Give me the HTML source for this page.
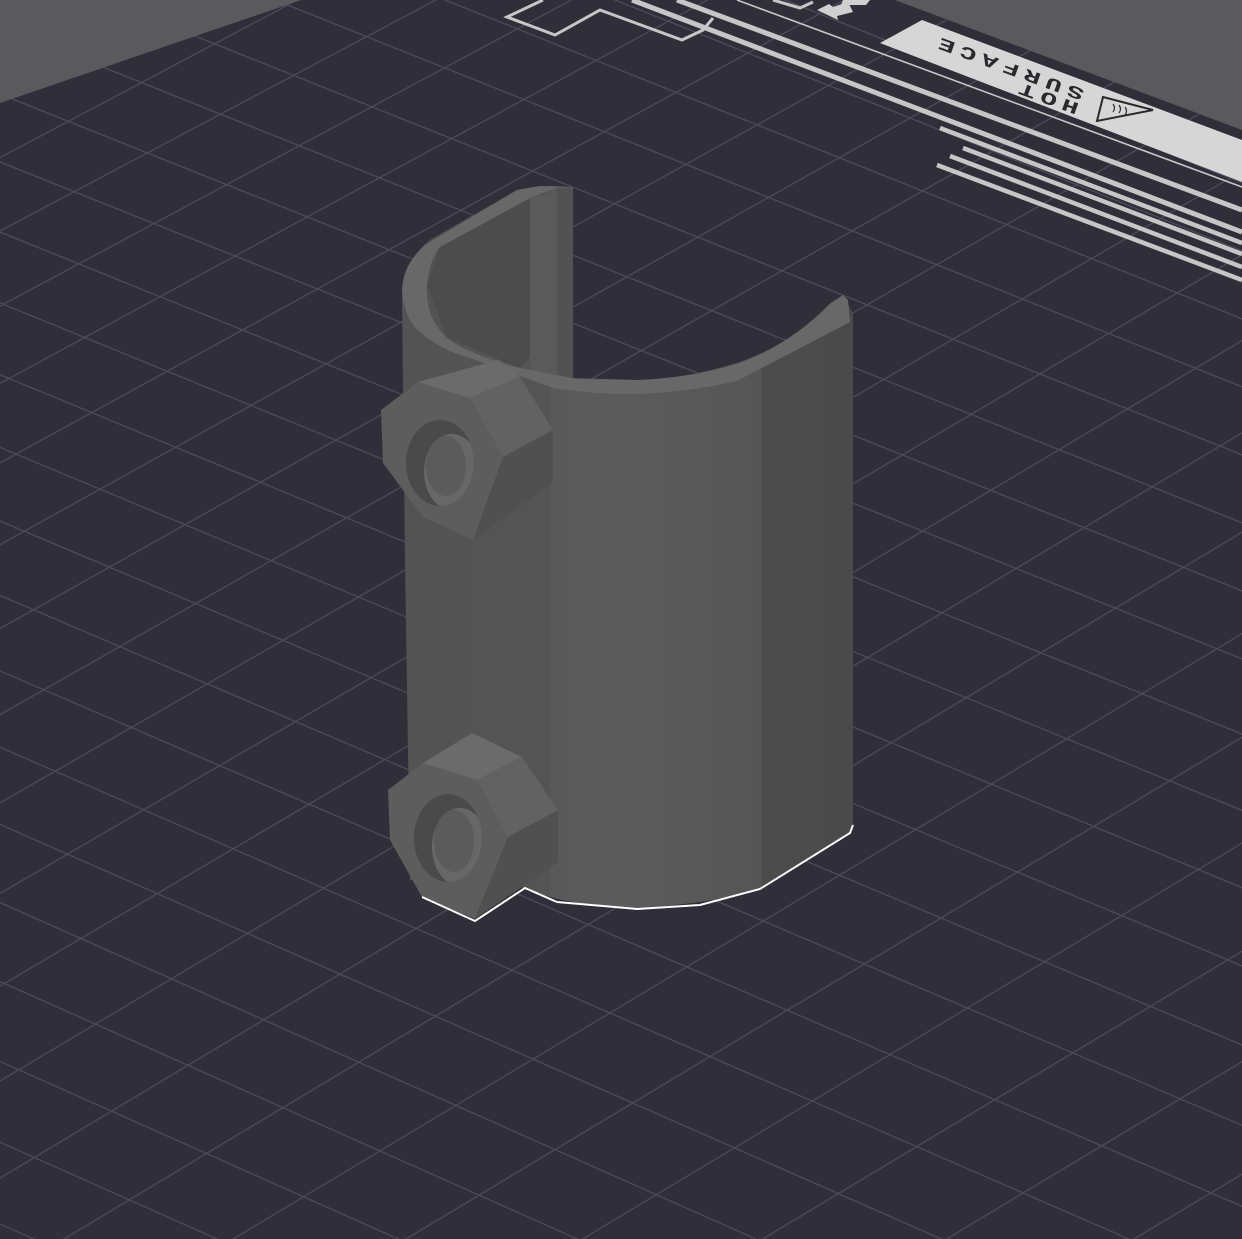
<!DOCTYPE html>
<html><head><meta charset="utf-8"><style>
html,body{margin:0;padding:0;background:#5a595e;overflow:hidden;width:1242px;height:1239px}
svg{display:block}
</style></head><body>
<svg id="s" width="1242" height="1239" viewBox="0 0 1242 1239" xmlns="http://www.w3.org/2000/svg">
<defs>
<clipPath id="plate"><polygon points="0,103 301,0 895,0 1242,130 1242,1239 0,1239"/></clipPath>
<clipPath id="lab"><polygon points="922,20 1242,140 1242,182 880,43"/></clipPath>
<linearGradient id="bodyg" gradientUnits="userSpaceOnUse" x1="402" y1="0" x2="853" y2="0">
<stop offset="0" stop-color="#535353"/>
<stop offset="0.327" stop-color="#545454"/>
<stop offset="0.33" stop-color="#595959"/>
<stop offset="0.49" stop-color="#5b5b5b"/>
<stop offset="0.66" stop-color="#585858"/>
<stop offset="0.795" stop-color="#555555"/>
<stop offset="0.8" stop-color="#4c4c4c"/>
<stop offset="1" stop-color="#4a4a4a"/>
</linearGradient>
<clipPath id="h1"><ellipse cx="440" cy="463" rx="34" ry="43"/></clipPath>
<clipPath id="h2"><ellipse cx="448" cy="838" rx="34" ry="44"/></clipPath>
</defs>
<rect width="1242" height="1239" fill="#5a595e"/>
<polygon points="0,103 301,0 895,0 1242,130 1242,1239 0,1239" fill="#302e39"/>
<g id="grid" clip-path="url(#plate)" stroke="#4d4b5a" stroke-width="1.3" fill="none"></g>

<!-- bed markings -->
<g clip-path="url(#plate)">
<polygon points="922,20 1242,140 1242,182 880,43" fill="#d6d6d6"/>
<g stroke="#c6c6c6" fill="none" stroke-linecap="butt">
<line x1="737" y1="0" x2="1242" y2="187" stroke-width="1.6"/>
<line x1="677" y1="0" x2="1242" y2="210" stroke-width="5"/>
<line x1="632" y1="0" x2="1242" y2="232" stroke-width="5"/>
<line x1="940" y1="128" x2="1242" y2="243" stroke-width="4.5"/>
<line x1="963" y1="148" x2="1242" y2="254" stroke-width="4.5"/>
<line x1="950" y1="156" x2="1242" y2="267" stroke-width="4.5"/>
<line x1="937" y1="165" x2="1242" y2="280" stroke-width="4.5"/>
<polyline points="543,0 507,17 555,35 600,10 682,40 703,30 713,18" stroke-width="3"/>
<polyline points="773,0 800,8 813,2" stroke-width="3"/>
</g>
<polygon points="817,10 829,4 833,7 848,2 853,12 837,16 838,20" fill="#d0d0d0"/>
<polygon points="843,0 870,0 866,5 841,5" fill="#d0d0d0"/>
<g clip-path="url(#lab)">
<g transform="translate(1080,104) rotate(200) scale(1,0.62)" font-family="'Liberation Mono',monospace" font-size="28" font-weight="bold" letter-spacing="6" fill="#2a2a2e">
<text x="0" y="0">HOT</text>
<text x="0" y="24">SURFACE</text>
</g>
</g>
<polygon points="1103,97 1153,110 1097,121" fill="none" stroke="#2a2a2e" stroke-width="2"/>
<g stroke="#2a2a2e" stroke-width="1.2" fill="none">
<path d="M1113,104 q3,4 0,8"/><path d="M1119,105 q3,4 0,8"/><path d="M1125,107 q3,4 0,8"/>
</g>
</g>

<!-- object -->
<path d="M402,300 L405,560 L410,880 L525,888 Q560,905 637,908 Q720,903 760,888 L850,832 L853,825 L853,313 L843,295 Q835,300 830,303 Q790,345 737,363 Q680,380 637,380 L573,378 L573,187 L557,186 Q540,185 517,190 L430,240 Q405,260 402,300 Z" fill="url(#bodyg)"/>
<polygon points="427,285 440,247 530,198 530,357 520,368 447,338" fill="#4c4c4c"/>
<rect x="530" y="195" width="28" height="180" fill="#5a5a5a"/>
<rect x="557" y="188" width="16" height="190" fill="#525252"/>
<path d="M402,292 Q405,320 420,332 Q440,350 470,358 L553,388 Q600,395 637,394 Q690,392 737,381 L850,322 L848,300 L843,295 L830,304 Q790,345 737,364 Q690,378 637,380 L577,379 L520,368 Q470,355 447,338 Q425,318 427,285 Q430,258 440,247 L532,197 L558,187 L540,186 L517,190 L425,245 Q402,265 402,292 Z" fill="#686868"/>

<!-- upper nut -->
<polygon points="381,410 418,382 470,398 503,457 473,540 423,517 383,463" fill="#5d5d5d"/>
<polygon points="418,382 498,360 520,377 470,398" fill="#6b6b6b"/>
<polygon points="470,398 520,377 553,430 503,457" fill="#626262"/>
<polygon points="503,457 553,430 553,482 473,540" fill="#505050"/>
<ellipse cx="440" cy="463" rx="34" ry="43" fill="#4a4a4a"/>
<ellipse cx="452" cy="472" rx="28" ry="38" fill="#676767" clip-path="url(#h1)"/>
<ellipse cx="446" cy="466" rx="20" ry="30" fill="#5b5b5b" clip-path="url(#h1)"/>

<!-- lower nut -->
<polygon points="388,790 423,763 477,780 508,837 475,919 422,897 390,840" fill="#5d5d5d"/>
<polygon points="423,763 472,733 522,757 477,780" fill="#6b6b6b"/>
<polygon points="477,780 522,757 558,810 508,837" fill="#626262"/>
<polygon points="508,837 558,810 558,862 475,919" fill="#505050"/>
<ellipse cx="448" cy="838" rx="34" ry="44" fill="#4a4a4a"/>
<ellipse cx="460" cy="847" rx="28" ry="39" fill="#676767" clip-path="url(#h2)"/>
<ellipse cx="454" cy="841" rx="20" ry="31" fill="#5b5b5b" clip-path="url(#h2)"/>

<polyline points="422,897 475,921 525,888 557,902 637,909 700,905 760,889 850,833 853,825" fill="none" stroke="#ffffff" stroke-width="2"/>
</svg>
<script>
(function(){
var g=document.getElementById('grid');var ns='http://www.w3.org/2000/svg';
function ln(x1,y1,x2,y2){var l=document.createElementNS(ns,'line');
l.setAttribute('x1',x1);l.setAttribute('y1',y1);l.setAttribute('x2',x2);l.setAttribute('y2',y2);g.appendChild(l);}
function cl(v){return v<0?0:(v>1?1:v);}
/* down-right family */
for(var k=-9;k<=16;k++){
  var c;
  if(k<=0){c=162+68*k;} else {c=162+70*k+0.9*k*(k-1)/2;}
  var s=0.40+0.046*cl((c-162)/754);
  ln(-10,c-10*s,1260,c+1260*s);
}
/* down-left family */
for(var j=-6;j<=24;j++){
  var d=231+74*j+1.1*j*j*(j>0?1:0.5);
  var t=0.53+0.07*cl((d-231)/900);
  ln(-10,d+10*t,1260,d-1260*t);
}
})();
</script>
</body></html>
